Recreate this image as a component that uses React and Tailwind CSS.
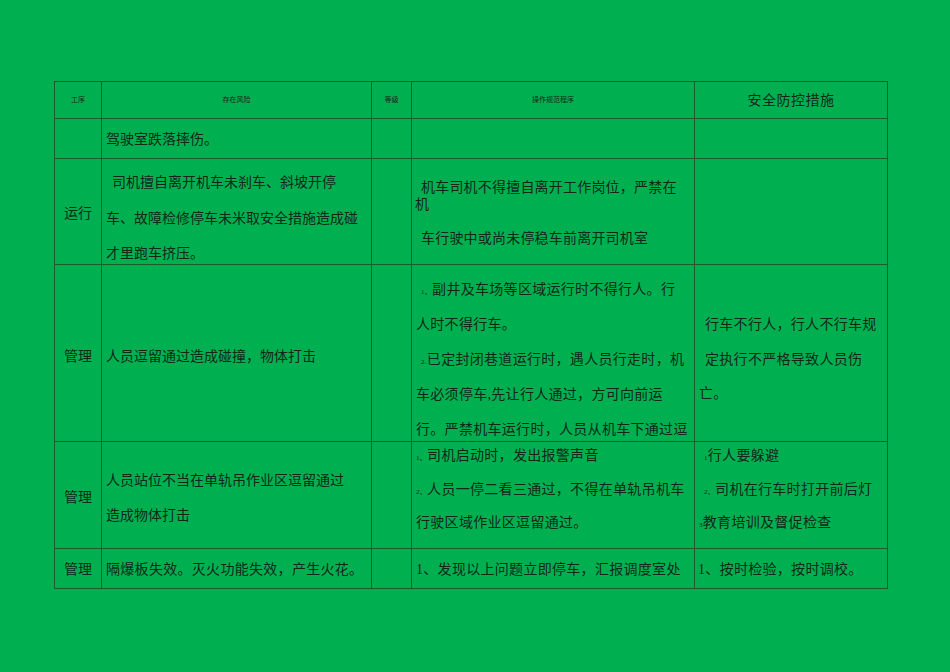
import React from "react";

const B = "border-r border-b border-[#1d5a2c]";
const F = { fontFamily: '"Liberation Serif", "Noto Sans CJK SC", serif' };

function Tiny({ children }) {
  return <span className="text-[7px] leading-[0]">{children}</span>;
}

export default function App() {
  return (
    <div
      className="w-[950px] h-[672px] bg-[#00b050] text-[#10281a] pt-[81px] pl-[54px]"
      style={F}
    >
      <div className="grid grid-cols-[47px_270px_40px_283px_193px] grid-rows-[37px_40px_106px_177px_107px_40px] w-[834px] border-l border-t border-[#1d5a2c] text-[14px]">
        {/* header */}
        <div className={`${B} flex items-center justify-center text-[7px]`}>工序</div>
        <div className={`${B} flex items-center justify-center text-[7px]`}>存在风险</div>
        <div className={`${B} flex items-center justify-center text-[7px]`}>等级</div>
        <div className={`${B} flex items-center justify-center text-[7px]`}>操作规范程序</div>
        <div className={`${B} flex items-center justify-center text-[14px] tracking-[0.5px]`}>安全防控措施</div>

        {/* row 2 */}
        <div className={B}></div>
        <div className={`${B} flex items-center pl-[4px] pt-[2px]`}>驾驶室跌落摔伤。</div>
        <div className={B}></div>
        <div className={B}></div>
        <div className={B}></div>

        {/* row 3 */}
        <div className={`${B} flex items-center justify-center pt-[4px]`}>运行</div>
        <div className={`${B} flex flex-col pt-[6px] pl-[4px] leading-[35.5px]`}>
          <div className="pl-[6px]">司机擅自离开机车未刹车、斜坡开停</div>
          <div>车、故障检修停车未米取安全措施造成碰</div>
          <div>才里跑车挤压。</div>
        </div>
        <div className={B}></div>
        <div className={`${B} flex flex-col pt-[21px] pl-[3px] leading-[16.5px] tracking-[0.2px]`}>
          <div className="pl-[6px]">机车司机不得擅自离开工作岗位，严禁在</div>
          <div>机</div>
          <div className="pl-[6px] mt-[18px]">车行驶中或尚未停稳车前离开司机室</div>
        </div>
        <div className={B}></div>

        {/* row 4 */}
        <div className={`${B} flex items-center justify-center pt-[6px]`}>管理</div>
        <div className={`${B} flex items-center pl-[4px] pt-[6px]`}>人员逗留通过造成碰撞，物体打击</div>
        <div className={B}></div>
        <div className={`${B} flex flex-col pt-[7px] pl-[4px] leading-[35px] tracking-[0.3px]`}>
          <div className="pl-[5px]"><Tiny>1、</Tiny>副井及车场等区域运行时不得行人。行</div>
          <div>人时不得行车。</div>
          <div className="pl-[5px]"><Tiny>2.</Tiny>已定封闭巷道运行时，遇人员行走时，机</div>
          <div>车必须停车,先让行人通过，方可向前运</div>
          <div>行。严禁机车运行时，人员从机车下通过逗</div>
        </div>
        <div className={`${B} flex flex-col pt-[43px] pl-[4px] leading-[34.5px] tracking-[0.3px]`}>
          <div className="pl-[6px]">行车不行人，行人不行车规</div>
          <div className="pl-[6px]">定执行不严格导致人员伤</div>
          <div>亡。</div>
        </div>

        {/* row 5 */}
        <div className={`${B} flex items-center justify-center pt-[4px]`}>管理</div>
        <div className={`${B} flex flex-col pt-[21px] pl-[4px] leading-[35px]`}>
          <div>人员站位不当在单轨吊作业区逗留通过</div>
          <div>造成物体打击</div>
        </div>
        <div className={B}></div>
        <div className={`${B} flex flex-col pl-[4px] leading-[33.5px] tracking-[0.3px]`}>
          <div className="-mt-[3px]"><Tiny>1、</Tiny>司机启动时，发出报警声音</div>
          <div><Tiny>2、</Tiny>人员一停二看三通过，不得在单轨吊机车</div>
          <div>行驶区域作业区逗留通过。</div>
        </div>
        <div className={`${B} flex flex-col pl-[4px] leading-[33.5px] tracking-[0.3px]`}>
          <div className="pl-[5px] -mt-[3px]"><Tiny>1</Tiny>行人要躲避</div>
          <div className="pl-[5px]"><Tiny>2、</Tiny>司机在行车时打开前后灯</div>
          <div><Tiny>3</Tiny>教育培训及督促检查</div>
        </div>

        {/* row 6 */}
        <div className={`${B} flex items-center justify-center pt-[2px]`}>管理</div>
        <div className={`${B} flex items-center pl-[4px] pt-[2px] tracking-[0.3px]`}>隔爆板失效。灭火功能失效，产生火花。</div>
        <div className={B}></div>
        <div className={`${B} flex items-center pl-[4px] pt-[2px] tracking-[0.3px]`}>1、发现以上问题立即停车，汇报调度室处</div>
        <div className={`${B} flex items-center pl-[3px] pt-[2px] tracking-[0.3px]`}>1、按时检验，按时调校。</div>
      </div>
    </div>
  );
}
